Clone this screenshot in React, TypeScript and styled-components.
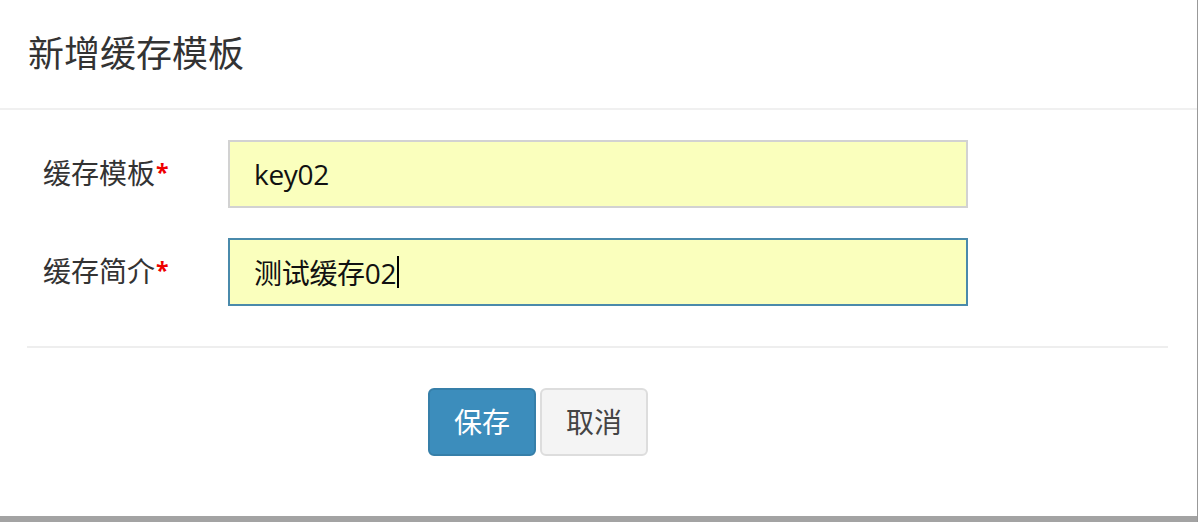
import { FC } from "react";
import styled, { createGlobalStyle } from "styled-components";

const GlobalStyle = createGlobalStyle`
  html, body {
    margin: 0;
    padding: 0;
    background: #a3a3a3;
  }
  * {
    box-sizing: border-box;
  }
  body {
    font-family: "Open Sans", "Noto Sans CJK SC", sans-serif;
  }
`;

const Page = styled.div`
  width: 1198px;
  height: 522px;
  background: #a3a3a3;
  border-right: 1px solid #999;
`;

const Modal = styled.div`
  width: 1197px;
  height: 516px;
  background: #fff;
`;

const Header = styled.div`
  height: 110px;
  padding: 0 30px 0 28px;
  display: flex;
  align-items: center;
  border-bottom: 2px solid #f0f0f0;
`;

const Title = styled.h4`
  margin: 0;
  font-size: 36px;
  font-weight: 400;
  line-height: 1.1;
  color: #333;
`;

const Body = styled.div`
  padding: 30px 30px 0;
`;

const Form = styled.div`
  display: flex;
  flex-direction: column;
  gap: 30px;
`;

const FormRow = styled.div`
  display: grid;
  grid-template-columns: 185px 740px;
  align-items: center;
  padding-left: 13px;
`;

const Label = styled.label`
  font-size: 28px;
  color: #333;
  line-height: 1.4;
`;

const Required = styled.span`
  display: inline-block;
  margin-left: 1px;
  font-size: 23px;
  font-weight: 700;
  color: #e00;
  vertical-align: 3px;
`;

const Field = styled.div<{ $focused?: boolean }>`
  height: 68px;
  padding: 0 24px;
  display: flex;
  align-items: center;
  font-size: 28px;
  letter-spacing: -0.3px;
  color: #111;
  background: #faffbd;
  border: 2px solid ${p => (p.$focused ? "#4a8aab" : "#d2d2d2")};
`;

const Caret = styled.span`
  display: inline-block;
  width: 2px;
  height: 32px;
  margin-left: 1px;
  background: #000;
`;

const Divider = styled.div`
  height: 2px;
  background: #eee;
  margin: 40px -1px 0 -3px;
`;

const Footer = styled.div`
  padding: 40px 0 0 398px;
  display: flex;
  gap: 4px;
`;

const Button = styled.button<{ $primary?: boolean }>`
  height: 68px;
  padding: 0 24px;
  font-family: inherit;
  font-size: 28px;
  line-height: 1;
  border-radius: 6px;
  border: 2px solid ${p => (p.$primary ? "#367fa9" : "#ddd")};
  background: ${p => (p.$primary ? "#3c8dbc" : "#f4f4f4")};
  color: ${p => (p.$primary ? "#fff" : "#444")};
  cursor: pointer;
`;

const fields = [
  { label: "缓存模板", value: "key02", focused: false },
  { label: "缓存简介", value: "测试缓存02", focused: true },
];

const App: FC = () => {
  return (
    <>
      <GlobalStyle />
      <Page>
        <Modal>
          <Header>
            <Title>新增缓存模板</Title>
          </Header>
          <Body>
            <Form>
              {fields.map(f => (
                <FormRow key={f.label}>
                  <Label>
                    {f.label}
                    <Required>*</Required>
                  </Label>
                  <Field $focused={f.focused}>
                    {f.value}
                    {f.focused && <Caret />}
                  </Field>
                </FormRow>
              ))}
            </Form>
            <Divider />
            <Footer>
              <Button $primary>保存</Button>
              <Button>取消</Button>
            </Footer>
          </Body>
        </Modal>
      </Page>
    </>
  );
};

export default App;
